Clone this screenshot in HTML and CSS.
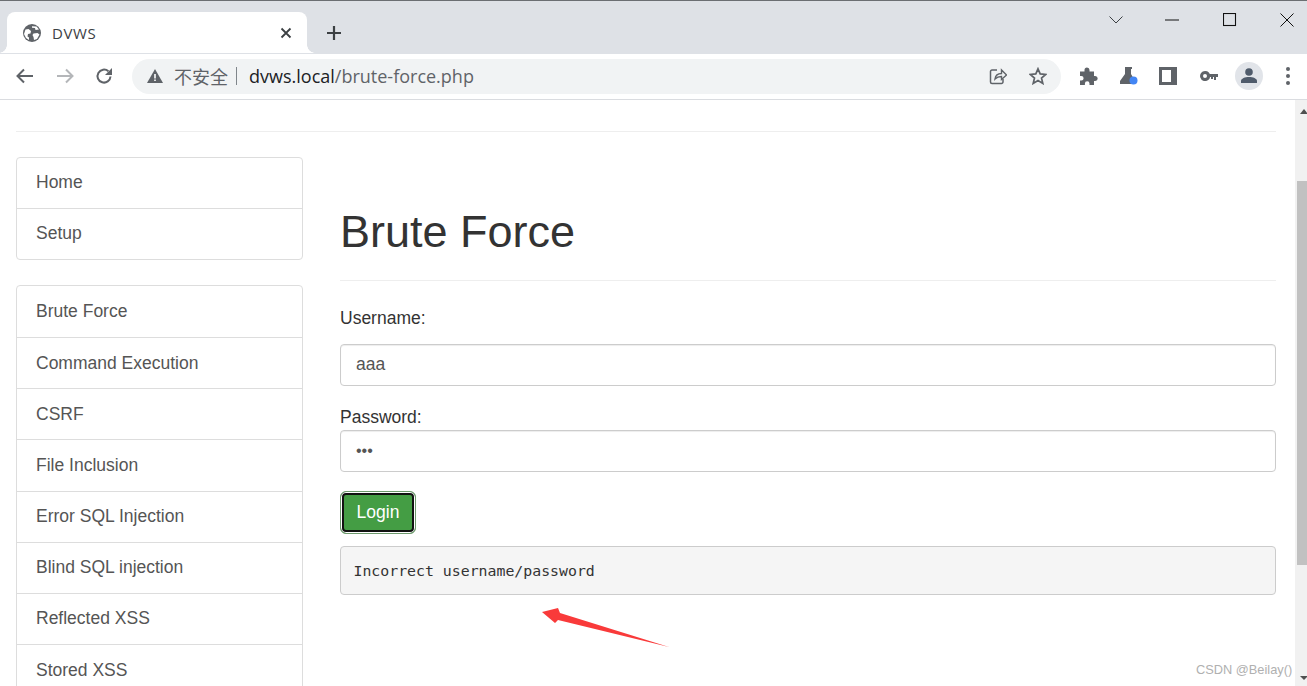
FILE: index.html
```html
<!DOCTYPE html>
<html lang="zh">
<head>
<meta charset="utf-8">
<title>DVWS</title>
<link rel="stylesheet" href="styles.css">
</head>
<body>
<div class="browser">
  <div class="tabstrip">
    <div class="tab">
      <svg class="globe" width="18" height="18" viewBox="0 0 18 18"><circle cx="9" cy="9" r="9" fill="#5f6368"/><path d="M2.500 5.500l3-.5 2.500 2-.5 2.500-2.500.5-.5 2.500 1.500 1 0 2.500-3-2-2-4zM9 2.200l4.500.3 2.500 3-3.500.5-.5-2-3-.2zM10.500 9.500l4-.5 2 1.500-2.500 4.500-3 1-.5-3-1-2z" fill="#fff"/></svg>
      <span class="tab-title">DVWS</span>
      <svg class="tab-close" width="12" height="12" viewBox="0 0 12 12"><path d="M1.500 1.500l9 9M10.500 1.500l-9 9" stroke="#3c4043" stroke-width="1.800"/></svg>
    </div>
    <svg class="newtab" width="16" height="16" viewBox="0 0 16 16"><path d="M8 1v14M1 8h14" stroke="#3c4043" stroke-width="2.200"/></svg>
    <div class="winctl">
      <svg class="w-chev" width="16" height="10" viewBox="0 0 16 10"><path d="M1.500 1.500L8 8l6.500-6.500" fill="none" stroke="#3c4043" stroke-width="1"/></svg>
      <svg class="w-min" width="14" height="14" viewBox="0 0 14 14"><path d="M0 7h14" stroke="#111" stroke-width="1"/></svg>
      <svg class="w-max" width="14" height="14" viewBox="0 0 14 14"><rect x=".5" y=".5" width="12" height="12" fill="none" stroke="#111" stroke-width="1.100"/></svg>
      <svg class="w-close" width="14" height="14" viewBox="0 0 14 14"><path d="M.5.5l13 13M13.500.5l-13 13" stroke="#111" stroke-width="1"/></svg>
    </div>
  </div>
  <div class="toolbar">
    <svg class="nav" width="18" height="16" viewBox="0 0 18 16"><path d="M17 8H2M8 1.500L1.500 8 8 14.500" fill="none" stroke="#5f6368" stroke-width="2"/></svg>
    <svg class="nav fwd" width="18" height="16" viewBox="0 0 18 16"><path d="M1 8h15M10 1.500L16.500 8 10 14.500" fill="none" stroke="#b4b6b9" stroke-width="2"/></svg>
    <svg class="nav reload" width="18" height="18" viewBox="0 0 18 18"><path d="M15.500 9.500A6.500 6.500 0 1 1 13.400 4.300" fill="none" stroke="#5f6368" stroke-width="2"/><path d="M17 1v7h-7z" fill="#5f6368"/></svg>
    <div class="omnibox">
      <svg class="warn" width="16" height="14" viewBox="0 0 16 14"><path d="M8 0l8 14H0z" fill="#5f6368"/><path d="M7.200 5h1.600v4.500H7.200zM7.200 10.500h1.600V12H7.200z" fill="#fff"/></svg>
      <span class="insecure">不安全</span>
      <span class="sep"></span>
      <span class="url"><span class="host">dvws.local</span>/brute-force.php</span>
      <svg class="share" width="18" height="18" viewBox="0 0 18 18"><path d="M8 3H3a1.500 1.500 0 0 0-1.500 1.500v10.500A1.500 1.500 0 0 0 3 16.500h9.500a1.500 1.500 0 0 0 1.500-1.500v-3" fill="none" stroke="#5f6368" stroke-width="1.500"/><path d="M6 12c.5-4 3-5.500 6.500-5.500V3l5 5-5 4.500V9.500c-2.500 0-4.500.5-6.500 2.500z" fill="none" stroke="#5f6368" stroke-width="1.400"/></svg>
      <svg class="star" width="18" height="18" viewBox="0 0 18 18"><path d="M9 1.800l2.200 5.100 5.500.5-4.200 3.600 1.300 5.400L9 13.500l-4.800 2.900 1.300-5.400L1.300 7.400l5.500-.5z" fill="none" stroke="#5f6368" stroke-width="1.700"/></svg>
    </div>
    <div class="exts">
      <svg class="ext" width="18" height="18" viewBox="0 0 18 18"><path d="M0 4.500h4.500V3a2.500 2.500 0 0 1 5 0v1.500H14V9h1.200a2.500 2.500 0 0 1 0 5H14v4H9.500v-1.500a2.300 2.300 0 0 0-4.600 0V18H0v-4.500h1.300a2.300 2.300 0 0 0 0-4.600H0z" fill="#5f6368"/></svg>
      <svg class="ext" width="20" height="20" viewBox="0 0 20 20"><path d="M6 1h7v2h-1v5l4 7v3H1v-3l5-7V3H6z" fill="#5f6368"/><circle cx="14.500" cy="14.500" r="4" fill="#4285f4"/></svg>
      <svg class="ext" width="18" height="18" viewBox="0 0 18 18"><path d="M0 0h18v18H0zM3 3v12h9V3z" fill="#5f6368" fill-rule="evenodd"/></svg>
      <svg class="ext" width="18" height="10" viewBox="0 0 18 10"><path d="M5 0a5 5 0 1 1-4.700 6.500h0A5 5 0 0 1 5 0zm0 3a2 2 0 1 0 0 4 2 2 0 0 0 0-4z" fill="#5f6368" fill-rule="evenodd"/><path d="M9 3h9v3h-2v3h-2V6h-1v2h-2V6H9z" fill="#5f6368"/></svg>
      <div class="avatar"><svg width="16" height="16" viewBox="0 0 16 16"><circle cx="8" cy="4" r="3.800" fill="#4f5b6b"/><path d="M0 15v-2c0-2.500 4-4 8-4s8 1.500 8 4v2z" fill="#4f5b6b"/></svg></div>
      <div class="kebab"><i></i><i></i><i></i></div>
    </div>
  </div>
</div>
<div class="viewport">
  <div class="page">
    <div class="top-rule"></div>
    <div class="columns">
      <nav class="sidebar">
        <ul class="menu menu-short">
          <li>Home</li>
          <li>Setup</li>
        </ul>
        <ul class="menu">
          <li>Brute Force</li>
          <li>Command Execution</li>
          <li>CSRF</li>
          <li>File Inclusion</li>
          <li>Error SQL Injection</li>
          <li>Blind SQL injection</li>
          <li>Reflected XSS</li>
          <li>Stored XSS</li>
        </ul>
      </nav>
      <main class="content">
        <h1>Brute Force</h1>
        <form class="form">
          <label class="lbl-user">Username:</label>
          <div class="input">aaa</div>
          <label class="lbl-pass">Password:</label>
          <div class="input pw">•••</div>
          <button type="button" class="btn">Login</button>
          <pre class="result">Incorrect username/password</pre>
        </form>
      </main>
    </div>
  </div>
  <div class="scrollbar">
    <span class="arrow up"></span>
    <div class="thumb"></div>
    <span class="arrow down"></span>
  </div>
  <svg class="red-arrow" width="130" height="44" viewBox="0 0 130 44"><path d="M1 5L17 1 19 6 128 40 17 13 14 16z" fill="#f93a3a"/></svg>
  <div class="watermark">CSDN @Beilay()</div>
</div>
</body>
</html>
```
FILE: styles.css
```css
* { box-sizing: border-box; }
html, body { margin: 0; padding: 0; width: 1307px; height: 686px; overflow: hidden; background: #fff; font-family: "Liberation Sans", Arial, sans-serif; }
.browser { height: 100px; border-top: 1px solid #6b6e72; }
.tabstrip { height: 53px; background: #dee1e6; display: flex; align-items: flex-start; position: relative; padding-left: 7px; }
.tab { position: relative; width: 300px; height: 41px; margin-top: 11px; background: #fff; border-radius: 8px 8px 0 0; display: flex; align-items: center; padding: 0 15px 0 16px; }
.tab::before, .tab::after { content: ""; position: absolute; bottom: 0; width: 8px; height: 8px; }
.tab::before { left: -8px; background: radial-gradient(circle at 0 0, transparent 7.500px, #fff 8px); }
.tab::after { right: -8px; background: radial-gradient(circle at 100% 0, transparent 7.500px, #fff 8px); }
.globe { flex: none; }
.tab-title { margin-left: 11px; font-family: "Open Sans", sans-serif; font-size: 15px; letter-spacing: .6px; color: #3c4043; flex: 1; padding-top: 1px; }
.tab-close { flex: none; }
.newtab { margin: 24px 0 0 19px; }
.winctl { position: absolute; top: 0; left: 0; width: 100%; height: 40px; }
.winctl svg { position: absolute; }
.w-chev { left: 1108px; top: 14px; }
.w-min { left: 1165px; top: 12px; }
.w-max { left: 1223px; top: 12px; }
.w-close { left: 1280px; top: 12px; }
.toolbar { height: 46px; background: #fff; border-bottom: 1px solid #dadce0; display: flex; align-items: center; padding: 0 0 1px 16px; }
.nav { flex: none; }
.fwd { margin-left: 22px; }
.reload { margin-left: 21px; }
.omnibox { width: 929px; height: 35px; margin-left: 19px; background: #f1f3f4; border-radius: 18px; display: flex; align-items: center; padding-left: 15px; }
.warn { flex: none; }
.insecure { margin-left: 11px; font-family: "Noto Sans CJK SC", sans-serif; font-size: 18px; color: #5f6368; line-height: 1; }
.sep { width: 1px; height: 18px; background: #80868b; margin: 0 12px 0 8px; }
.url { font-family: "Open Sans", sans-serif; font-size: 18px; color: #5f6368; flex: 1; }
.host { color: #202124; }
.share { flex: none; margin-right: 22px; }
.star { flex: none; margin-right: 14px; }
.exts { display: flex; align-items: center; margin-left: 19px; }
.ext { flex: none; margin-right: 21px; }
.ext:nth-child(2) { margin-right: 20px; }
.ext:nth-child(3) { margin-right: 23px; }
.ext:nth-child(4) { margin-right: 17px; }
.avatar { width: 28px; height: 28px; border-radius: 50%; background: #e1e4e9; display: flex; align-items: center; justify-content: center; }
.kebab { margin-left: 23px; display: flex; flex-direction: column; gap: 3px; }
.kebab i { display: block; width: 4px; height: 4px; border-radius: 50%; background: #5f6368; }
.viewport { position: relative; height: 586px; display: flex; justify-content: space-between; overflow: hidden; }
.page { width: 1292px; padding: 31px 16px 0 16px; }
.top-rule { border-top: 1px solid #eee; }
.columns { display: flex; margin-top: 25px; }
.sidebar { width: 287px; flex: none; }
.menu { list-style: none; margin: 0 0 25px; padding: 0; border: 1px solid #ddd; border-radius: 4px; }
.menu li { height: 51.150px; padding: 0 19px; display: flex; align-items: center; font-size: 17.500px; color: #555; border-top: 1px solid #ddd; }
.menu-short li { height: 51px; padding-bottom: 1px; }
.menu-short li:first-child { height: 50px; }
.menu li:first-child { border-top: 0; }
.content { flex: 1; margin-left: 37px; color: #333; }
h1 { margin: 0; padding: 50px 0 25px; height: 124px; border-bottom: 1px solid #eee; font-size: 45px; font-weight: 400; line-height: 50px; color: #333; }
.form { display: flex; flex-direction: column; align-items: flex-start; }
label { font-size: 17.500px; line-height: 20px; color: #333; }
.lbl-user { margin-top: 27px; }
.lbl-pass { margin-top: 21px; }
.input { width: 100%; height: 42px; margin-top: 16px; border: 1px solid #ccc; border-radius: 4px; padding: 0 15px; font-size: 17.500px; line-height: 38px; color: #555; box-shadow: inset 0 1px 1px rgba(0,0,0,.075); }
.input.pw { margin-top: 3px; font-size: 16px; line-height: 39px; }
.btn { margin-top: 19px; width: 76px; height: 43px; padding: 0 0 1px; border: 1px solid #6d9a6d; box-shadow: inset 0 0 0 1px #fff, inset 0 0 0 3px #111; border-radius: 6px; background: #449d44; color: #fff; font: 17.500px "Liberation Sans", sans-serif; }
.result { width: 100%; height: 49px; margin: 12px 0 0; padding: 1px 12.500px 0; border: 1px solid #ccc; border-radius: 4px; background: #f5f5f5; font-family: "DejaVu Sans Mono", monospace; font-size: 14.850px; line-height: 47px; color: #333; }
.scrollbar { width: 12px; flex: none; background: #f1f1f1; position: relative; }
.thumb { position: absolute; top: 81px; right: 0; width: 10px; height: 384px; background: #c1c1c1; }
.arrow { position: absolute; right: -1px; width: 0; height: 0; border-left: 4px solid transparent; border-right: 4px solid transparent; }
.arrow.up { top: 9px; border-bottom: 5px solid #505050; }
.arrow.down { bottom: 6px; border-top: 4px solid #505050; }
.red-arrow { position: absolute; left: 541px; top: 507px; }
.watermark { position: absolute; left: 1196px; top: 562px; font-size: 12.800px; color: #b0b0b0; }
```
